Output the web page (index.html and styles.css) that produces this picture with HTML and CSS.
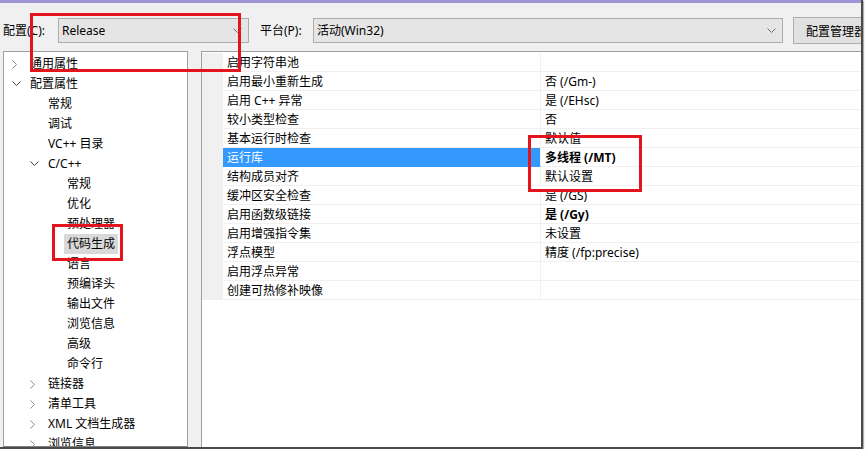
FILE: index.html
```html
<!DOCTYPE html>
<html>
<head>
<meta charset="utf-8">
<link rel="stylesheet" href="styles.css">
</head>
<body>
<div class="frame">
  <div class="topband"></div>
  <div class="toolbar">
    <span class="lbl lbl-cfg">配置(C):</span>
    <div class="combo combo-cfg"><span>Release</span><svg class="chev" width="9" height="6" viewBox="0 0 9 6"><polyline points="0.5,0.5 4.5,4.5 8.5,0.5" fill="none" stroke="#707070" stroke-width="1"/></svg></div>
    <span class="lbl lbl-plat">平台(P):</span>
    <div class="combo combo-plat"><span>活动(Win32)</span><svg class="chev" width="9" height="6" viewBox="0 0 9 6"><polyline points="0.5,0.5 4.5,4.5 8.5,0.5" fill="none" stroke="#707070" stroke-width="1"/></svg></div>
    <div class="btn">配置管理器(O)...</div>
  </div>
  <div class="main">
    <div class="tree">
      <div class="trow l0"><span class="tw"><svg width="6" height="9" viewBox="0 0 6 9"><polyline points="0.5,0.5 4.5,4.5 0.5,8.5" fill="none" stroke="#8a8a8a" stroke-width="1"/></svg></span><span class="tl">通用属性</span></div>
      <div class="trow l0"><span class="tw"><svg width="9" height="6" viewBox="0 0 9 6"><polyline points="0.5,0.5 4.5,4.5 8.5,0.5" fill="none" stroke="#444" stroke-width="1"/></svg></span><span class="tl">配置属性</span></div>
      <div class="trow l1"><span class="tw"></span><span class="tl">常规</span></div>
      <div class="trow l1"><span class="tw"></span><span class="tl">调试</span></div>
      <div class="trow l1"><span class="tw"></span><span class="tl">VC++ 目录</span></div>
      <div class="trow l1"><span class="tw"><svg width="9" height="6" viewBox="0 0 9 6"><polyline points="0.5,0.5 4.5,4.5 8.5,0.5" fill="none" stroke="#444" stroke-width="1"/></svg></span><span class="tl">C/C++</span></div>
      <div class="trow l2"><span class="tw"></span><span class="tl">常规</span></div>
      <div class="trow l2"><span class="tw"></span><span class="tl">优化</span></div>
      <div class="trow l2"><span class="tw"></span><span class="tl">预处理器</span></div>
      <div class="trow l2"><span class="tw"></span><span class="tl sel">代码生成</span></div>
      <div class="trow l2"><span class="tw"></span><span class="tl">语言</span></div>
      <div class="trow l2"><span class="tw"></span><span class="tl">预编译头</span></div>
      <div class="trow l2"><span class="tw"></span><span class="tl">输出文件</span></div>
      <div class="trow l2"><span class="tw"></span><span class="tl">浏览信息</span></div>
      <div class="trow l2"><span class="tw"></span><span class="tl">高级</span></div>
      <div class="trow l2"><span class="tw"></span><span class="tl">命令行</span></div>
      <div class="trow l1"><span class="tw"><svg width="6" height="9" viewBox="0 0 6 9"><polyline points="0.5,0.5 4.5,4.5 0.5,8.5" fill="none" stroke="#8a8a8a" stroke-width="1"/></svg></span><span class="tl">链接器</span></div>
      <div class="trow l1"><span class="tw"><svg width="6" height="9" viewBox="0 0 6 9"><polyline points="0.5,0.5 4.5,4.5 0.5,8.5" fill="none" stroke="#8a8a8a" stroke-width="1"/></svg></span><span class="tl">清单工具</span></div>
      <div class="trow l1"><span class="tw"><svg width="6" height="9" viewBox="0 0 6 9"><polyline points="0.5,0.5 4.5,4.5 0.5,8.5" fill="none" stroke="#8a8a8a" stroke-width="1"/></svg></span><span class="tl">XML 文档生成器</span></div>
      <div class="trow l1"><span class="tw"><svg width="6" height="9" viewBox="0 0 6 9"><polyline points="0.5,0.5 4.5,4.5 0.5,8.5" fill="none" stroke="#8a8a8a" stroke-width="1"/></svg></span><span class="tl">浏览信息</span></div>
    </div>
    <div class="grid">
      <div class="grow"><div class="gut"></div><div class="name">启用字符串池</div><div class="val"></div></div>
      <div class="grow"><div class="gut"></div><div class="name">启用最小重新生成</div><div class="val">否 (/Gm-)</div></div>
      <div class="grow"><div class="gut"></div><div class="name">启用 C++ 异常</div><div class="val">是 (/EHsc)</div></div>
      <div class="grow"><div class="gut"></div><div class="name">较小类型检查</div><div class="val">否</div></div>
      <div class="grow"><div class="gut"></div><div class="name">基本运行时检查</div><div class="val">默认值</div></div>
      <div class="grow"><div class="gut"></div><div class="name selrow">运行库</div><div class="val bold">多线程 (/MT)</div></div>
      <div class="grow"><div class="gut"></div><div class="name">结构成员对齐</div><div class="val">默认设置</div></div>
      <div class="grow"><div class="gut"></div><div class="name">缓冲区安全检查</div><div class="val">是 (/GS)</div></div>
      <div class="grow"><div class="gut"></div><div class="name">启用函数级链接</div><div class="val bold">是 (/Gy)</div></div>
      <div class="grow"><div class="gut"></div><div class="name">启用增强指令集</div><div class="val">未设置</div></div>
      <div class="grow"><div class="gut"></div><div class="name">浮点模型</div><div class="val">精度 (/fp:precise)</div></div>
      <div class="grow"><div class="gut"></div><div class="name">启用浮点异常</div><div class="val"></div></div>
      <div class="grow"><div class="gut"></div><div class="name">创建可热修补映像</div><div class="val"></div></div>
    </div>
  </div>
  <div class="mark mark1"></div>
  <div class="mark mark2"></div>
  <div class="mark mark3"></div>
</div>
</body>
</html>
```
FILE: styles.css
```css
html, body {
  margin: 0;
  padding: 0;
  background: #ffffff;
}
body {
  font-family: "Noto Sans", "Noto Sans CJK SC", sans-serif;
  font-size: 12px;
  color: #000;
}
.frame {
  position: relative;
  width: 861px;
  height: 447px;
  background: #f0f0f0;
  border-right: 2px solid #4a4a4a;
  border-bottom: 2px solid #4a4a4a;
  box-shadow: 1px 1px 1px #b0b0b0;
  overflow: hidden;
  display: flex;
  flex-direction: column;
}
.topband {
  height: 3px;
  background: #9c96d4;
  flex: none;
}
.toolbar {
  height: 48px;
  flex: none;
  display: flex;
  align-items: center;
  padding-left: 3px;
  padding-top: 7px;
  box-sizing: border-box;
}
.lbl {
  white-space: nowrap;
  line-height: 16px;
  flex: none;
}
.lbl-cfg {
  width: 55px;
}
.combo {
  height: 25px;
  box-sizing: border-box;
  border: 1px solid #adadad;
  background: #e5e5e5;
  display: flex;
  align-items: center;
  justify-content: space-between;
  padding: 0 6px 0 3px;
  flex: none;
}
.combo span {
  line-height: 16px;
}
.combo-cfg {
  width: 191px;
}
.lbl-plat {
  margin-left: 11px;
  width: 53px;
}
.combo-plat {
  width: 470px;
}
.chev {
  display: block;
}
.btn {
  margin-left: 10px;
  height: 27px;
  box-sizing: border-box;
  border: 1px solid #adadad;
  background: #e1e1e1;
  padding: 0 12px;
  display: flex;
  align-items: center;
  white-space: nowrap;
  flex: none;
}
.main {
  flex: 1;
  display: flex;
  min-height: 0;
}
.tree {
  margin-left: 3px;
  width: 185px;
  box-sizing: border-box;
  border: 1px solid #a0a0a0;
  border-bottom: 1px solid #828282;
  background: #fff;
  padding-top: 2px;
  flex: none;
  overflow: hidden;
}
.trow {
  height: 20px;
  display: flex;
  align-items: center;
  white-space: nowrap;
}
.l0 { padding-left: 6px; }
.l1 { padding-left: 24px; }
.l2 { padding-left: 43px; }
.tw {
  width: 17px;
  height: 20px;
  flex: none;
  display: flex;
  align-items: center;
  padding-left: 2px;
  box-sizing: border-box;
}
.tw svg { display: block; }
.tl {
  padding: 0 3px;
  line-height: 20px;
}
.tl.sel {
  background: #d9d9d9;
}
.grid {
  margin-left: 13px;
  flex: 1;
  border-left: 1px solid #a0a0a0;
  border-top: 1px solid #a0a0a0;
  background: #fff;
  padding-top: 1px;
  min-width: 0;
}
.grow {
  display: flex;
  height: 19px;
}
.gut {
  width: 21px;
  flex: none;
  background: #f0f0f0;
}
.name {
  width: 318px;
  flex: none;
  box-sizing: border-box;
  border-right: 1px solid #f0f0f0;
  border-bottom: 1px solid #f0f0f0;
  padding-left: 4px;
  padding-top: 1px;
  line-height: 17px;
  white-space: nowrap;
}
.name.selrow {
  background: #3399ff;
  color: #fff;
  border-bottom-color: #3399ff;
}
.val {
  flex: 1;
  border-bottom: 1px solid #f0f0f0;
  padding-left: 4px;
  padding-top: 1px;
  line-height: 17px;
  white-space: nowrap;
}
.val.bold {
  font-weight: bold;
}
.mark {
  position: absolute;
  border: 3px solid #e3141c;
  box-sizing: border-box;
  pointer-events: none;
}
.mark1 {
  left: 30px;
  top: 13px;
  width: 211px;
  height: 59px;
}
.mark2 {
  left: 52px;
  top: 224px;
  width: 71px;
  height: 37px;
}
.mark3 {
  left: 528px;
  top: 135px;
  width: 114px;
  height: 57px;
}
```
